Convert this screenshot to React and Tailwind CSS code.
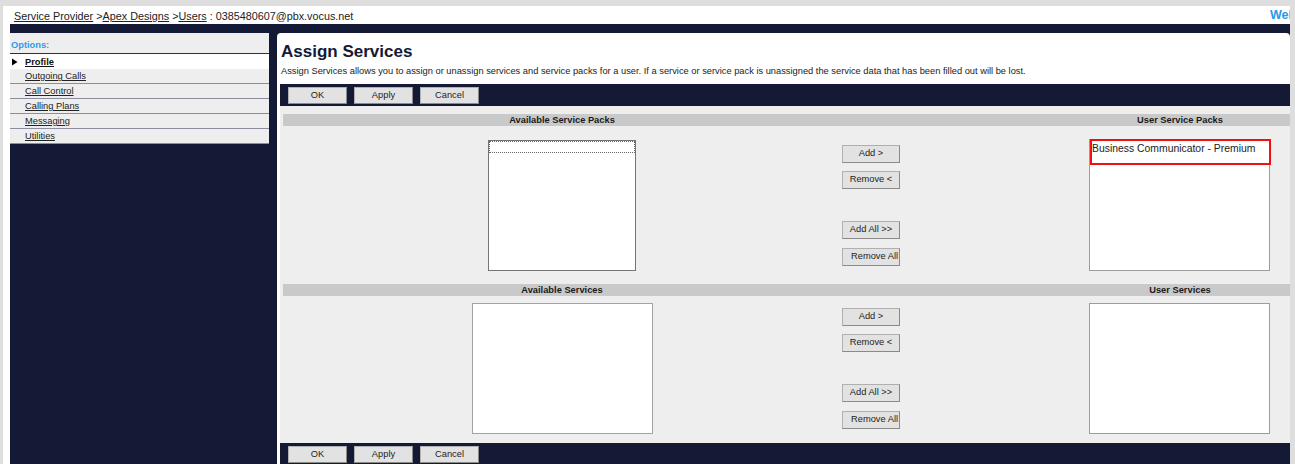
import React from "react";

const font = { fontFamily: '"Liberation Sans", Arial, sans-serif' };

function BarButton({ children }) {
  return (
    <button className="flex h-[17px] w-[59px] items-center justify-center border border-[#b0b0b0] border-b-[#8a8a8a] border-r-[#8a8a8a] bg-[#e2e2e2] text-[9.3px] leading-none text-[#222]">
      {children}
    </button>
  );
}

function MoveButton({ children, left }) {
  return (
    <button
      className={
        left
          ? "flex h-[18px] w-[58px] items-center justify-start overflow-hidden whitespace-nowrap border border-[#b0b0b0] border-b-[#8a8a8a] border-r-[#8a8a8a] bg-[#e2e2e2] pl-[8px] text-[9.3px] leading-none text-[#222]"
          : "flex h-[18px] w-[58px] items-center justify-center whitespace-nowrap border border-[#b0b0b0] border-b-[#8a8a8a] border-r-[#8a8a8a] bg-[#e2e2e2] text-[9.3px] leading-none text-[#222]"
      }
    >
      {children}
    </button>
  );
}

function ActionBar() {
  return (
    <div className="flex h-[22px] gap-[7px] bg-[#141936] pl-[8px] pt-[3px]">
      <BarButton>OK</BarButton>
      <BarButton>Apply</BarButton>
      <BarButton>Cancel</BarButton>
    </div>
  );
}

function MoveButtons({ top }) {
  return (
    <div className={top ? "ml-[1px] mt-[6px] flex flex-col" : "ml-[1px] mt-[5px] flex flex-col"}>
      <MoveButton>Add &gt;</MoveButton>
      <div className="mt-[8px]">
        <MoveButton>Remove &lt;</MoveButton>
      </div>
      <div className="mt-[32px]">
        <MoveButton>Add All &gt;&gt;</MoveButton>
      </div>
      <div className="mt-[9px]">
        <MoveButton left>Remove All</MoveButton>
      </div>
    </div>
  );
}

function SectionHeader({ left, right }) {
  return (
    <div className="grid h-[12px] grid-cols-[558px_229px_220px] bg-[#c9c9c9] text-[9.3px] font-bold leading-[12px] text-[#1a1a1a]">
      <div className="text-center">{left}</div>
      <div />
      <div className="text-center">{right}</div>
    </div>
  );
}

const sideItems = ["Outgoing Calls", "Call Control", "Calling Plans", "Messaging", "Utilities"];

export default function App() {
  return (
    <div className="h-[464px] w-[1295px] overflow-hidden bg-[#dedede] pl-[3px] pr-[5px] pt-[6px]" style={font}>
      <div className="flex h-[458px] w-[1287px] flex-col overflow-hidden bg-white pl-[7px]">
        {/* breadcrumb row */}
        <div className="flex h-[18px] shrink-0 pt-[4px] text-[10.8px] leading-[12px] text-[#222]">
          <div className="flex-1 pl-[4px] whitespace-nowrap">
            <span className="underline">Service Provider</span> &gt;
            <span className="underline">Apex Designs</span> &gt;
            <span className="underline">Users</span> : 0385480607@pbx.vocus.net
          </div>
          <div className="w-[20px] overflow-hidden whitespace-nowrap text-[12.5px] font-bold leading-[10px] text-[#1f9bea]">
            Welcome
          </div>
        </div>

        {/* navy body */}
        <div className="flex flex-1 bg-[#141936] pt-[9px]">
          {/* options menu */}
          <div className="w-[267px] shrink-0">
            <div className="w-[259px] bg-[#eeeeee] text-[9.3px] leading-[10px]">
              <div className="h-[21px] border-b border-[#2a2f4a] pl-[1px] pt-[7px] font-bold text-[#2b9cf0]">
                Options:
              </div>
              <div className="flex h-[15px] items-center bg-white">
                <svg width="15" height="8" viewBox="0 0 15 8" className="shrink-0">
                  <polygon points="2,0.5 7.5,4 2,7.5" fill="#000" />
                </svg>
                <span className="font-bold text-[#111] underline">Profile</span>
              </div>
              {sideItems.map((item) => (
                <div
                  key={item}
                  className="flex h-[15px] items-center border-b border-[#8b8ea0] pl-[15px] text-[#222]"
                >
                  <span className="underline">{item}</span>
                </div>
              ))}
            </div>
          </div>

          {/* content panel */}
          <div className="flex-1 rounded-t-[4px] bg-white pl-[3px] pt-[9px]">
            <h1 className="pl-[1px] text-[17px] font-bold leading-[19px] text-[#141936]">Assign Services</h1>
            <p className="mt-[5px] pl-[1px] text-[9.3px] leading-[10px] text-[#222] whitespace-nowrap">
              Assign Services allows you to assign or unassign services and service packs for a user. If a service or
              service pack is unassigned the service data that has been filled out will be lost.
            </p>
            <div className="mt-[8px]">
              <ActionBar />
            </div>

            <div className="bg-[#eeeeee] pb-[9px] pl-[3px] pt-[8px]">
              <SectionHeader left="Available Service Packs" right="User Service Packs" />
              <div className="grid grid-cols-[558px_229px_220px] pt-[13px]">
                <div className="flex justify-center pt-[1px]">
                  <div className="h-[131px] w-[148px] border border-[#747474] bg-white">
                    <div className="h-[12px] border border-dotted border-[#666]" />
                  </div>
                </div>
                <MoveButtons top />
                <div className="pl-[19px]">
                  <div className="relative h-[132px] w-[181px] border border-[#9c9c9c] bg-white">
                    <div className="pl-[2px] pt-[3px] text-[10.4px] leading-[12px] text-[#222] whitespace-nowrap">
                      Business Communicator - Premium
                    </div>
                    <div className="absolute left-[0px] top-[-1px] h-[26px] w-[181px] border-2 border-[#f01010]" />
                  </div>
                </div>
              </div>

              <div className="mt-[13px]">
                <SectionHeader left="Available Services" right="User Services" />
              </div>
              <div className="grid grid-cols-[558px_229px_220px] pt-[7px]">
                <div className="flex justify-center">
                  <div className="h-[131px] w-[181px] border border-[#a3a3a3] bg-white" />
                </div>
                <MoveButtons />
                <div className="pl-[19px]">
                  <div className="h-[131px] w-[181px] border border-[#9c9c9c] bg-white" />
                </div>
              </div>
            </div>

            <ActionBar />
          </div>
        </div>
      </div>
    </div>
  );
}
